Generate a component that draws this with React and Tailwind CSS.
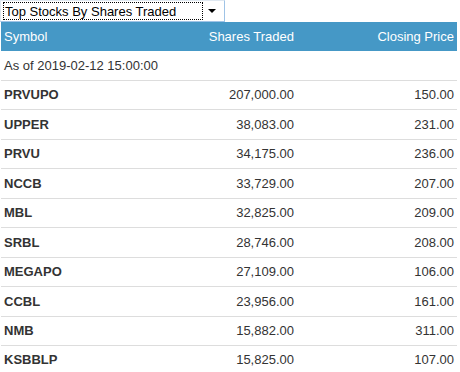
import React from 'react';

const rows = [
  ['PRVUPO', '207,000.00', '150.00'],
  ['UPPER', '38,083.00', '231.00'],
  ['PRVU', '34,175.00', '236.00'],
  ['NCCB', '33,729.00', '207.00'],
  ['MBL', '32,825.00', '209.00'],
  ['SRBL', '28,746.00', '208.00'],
  ['MEGAPO', '27,109.00', '106.00'],
  ['CCBL', '23,956.00', '161.00'],
  ['NMB', '15,882.00', '311.00'],
  ['KSBBLP', '15,825.00', '107.00'],
];

const font = { fontFamily: '"Liberation Sans", Arial, sans-serif' };

export default function App() {
  return (
    <div className="w-[460px] h-[372px] overflow-hidden bg-white text-[13px]" style={font}>
      {/* dropdown */}
      <div className="w-[225px] h-[22px] border border-[#9fc3e6] border-t-[#dfe8f1] border-l-[#dfe8f1] flex items-center pl-[2px] pr-[4px] box-border bg-white">
        <div className="flex-1 h-[18px] border border-dotted border-black flex items-center pl-[1px] text-black leading-none">
          Top Stocks By Shares Traded
        </div>
        <div className="w-[17px] flex justify-center">
          <div className="w-0 h-0 border-l-[4px] border-r-[4px] border-t-[4px] border-l-transparent border-r-transparent border-t-black" />
        </div>
      </div>

      <div className="w-[456px] ml-px">
        {/* header */}
        <div className="grid grid-cols-[160px_137px_1fr] h-[29px] items-center bg-[#4598c6] text-white">
          <div className="pl-[3px]">Symbol</div>
          <div className="text-right pr-[4px]">Shares Traded</div>
          <div className="text-right pr-[3px]">Closing Price</div>
        </div>

        <div className="h-[29px] flex items-center pl-[3px] text-[#333]">As of 2019-02-12 15:00:00</div>

        {rows.map(([sym, shares, price]) => (
          <div
            key={sym}
            className="grid grid-cols-[160px_137px_1fr] h-[29.44px] box-border border-t border-[#dddddd] items-center text-[#333]"
          >
            <div className="pl-[3px] font-bold">{sym}</div>
            <div className="text-right pr-[4px]">{shares}</div>
            <div className="text-right pr-[3px]">{price}</div>
          </div>
        ))}
      </div>
    </div>
  );
}
